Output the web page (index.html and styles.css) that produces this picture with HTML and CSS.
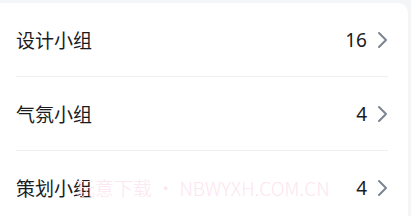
FILE: index.html
```html
<!DOCTYPE html>
<html lang="zh">
<head>
<meta charset="utf-8">
<link rel="stylesheet" href="styles.css">
</head>
<body>
<div class="page">
  <div class="card">
    <div class="row">
      <span class="label">设计小组</span>
      <span class="meta"><span class="count">16</span><svg class="chev" viewBox="0 0 12 18" width="12" height="18"><path d="M3 2 L10 9 L3 16" fill="none" stroke="#7d8590" stroke-width="2" stroke-linecap="round" stroke-linejoin="round"/></svg></span>
    </div>
    <div class="row">
      <span class="label">气氛小组</span>
      <span class="meta"><span class="count">4</span><svg class="chev" viewBox="0 0 12 18" width="12" height="18"><path d="M3 2 L10 9 L3 16" fill="none" stroke="#7d8590" stroke-width="2" stroke-linecap="round" stroke-linejoin="round"/></svg></span>
    </div>
    <div class="row">
      <span class="label">策划小组</span>
      <span class="meta"><span class="count">4</span><svg class="chev" viewBox="0 0 12 18" width="12" height="18"><path d="M3 2 L10 9 L3 16" fill="none" stroke="#7d8590" stroke-width="2" stroke-linecap="round" stroke-linejoin="round"/></svg></span>
    </div>
    <div class="watermark">玩意下载 • NBWYXH.COM.CN</div>
  </div>
</div>
</body>
</html>
```
FILE: styles.css
```css
html, body {
  margin: 0;
  padding: 0;
  background: #f4f5f7;
}
.page {
  width: 411px;
  height: 216px;
  padding-top: 3px;
  box-sizing: border-box;
  overflow: hidden;
}
.card {
  position: relative;
  width: 408px;
  background: #ffffff;
  border-top-right-radius: 10px;
  padding: 0 20px 0 16px;
  box-sizing: border-box;
}
.row {
  height: 73px;
  display: flex;
  align-items: center;
  justify-content: space-between;
  border-bottom: 1px solid #eeeff1;
}
.label {
  font-family: "Noto Sans CJK SC", sans-serif;
  font-size: 19px;
  color: #1a1b1e;
}
.meta {
  display: flex;
  align-items: center;
  gap: 9px;
}
.count {
  font-family: "Noto Sans", "Open Sans", sans-serif;
  font-size: 19px;
  color: #1a1b1e;
}
.chev {
  display: block;
}
.watermark {
  position: absolute;
  left: 76px;
  top: 171px;
  font-family: "Noto Sans CJK SC", sans-serif;
  font-size: 19px;
  font-weight: 300;
  color: #fce6f0;
  pointer-events: none;
}
```
